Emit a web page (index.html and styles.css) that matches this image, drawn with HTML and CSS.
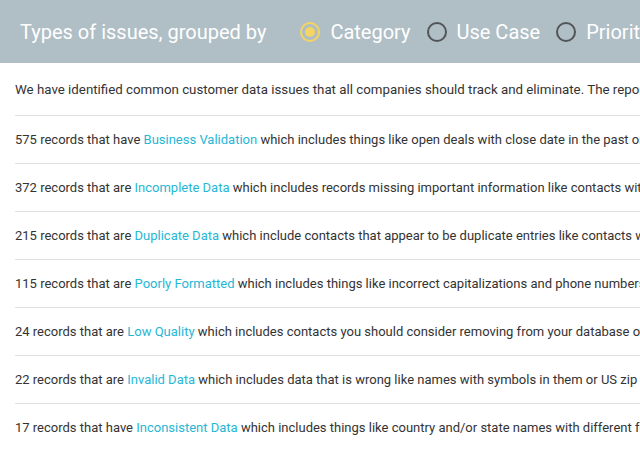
FILE: index.html
```html
<!DOCTYPE html>
<html>
<head>
<meta charset="utf-8">
<link rel="stylesheet" href="styles.css">
</head>
<body>
<header class="bar">
  <h1 class="title">Types of issues, grouped by</h1>
  <div class="radios">
    <label class="radio checked"><span class="dot"></span>Category</label>
    <label class="radio"><span class="dot"></span>Use Case</label>
    <label class="radio"><span class="dot"></span>Priority</label>
  </div>
</header>
<main class="list">
  <div class="row intro">We have identified common customer data issues that all companies should track and eliminate. The report below shows the issues found in your database.</div>
  <div class="row">575 records that have <a class="link">Business Validation</a> which includes things like open deals with close date in the past or deals without amounts.</div>
  <div class="row">372 records that are <a class="link">Incomplete Data</a> which includes records missing important information like contacts without email addresses.</div>
  <div class="row">215 records that are <a class="link">Duplicate Data</a> which include contacts that appear to be duplicate entries like contacts with the same email.</div>
  <div class="row">115 records that are <a class="link">Poorly Formatted</a> which includes things like incorrect capitalizations and phone numbers with bad formats.</div>
  <div class="row">24 records that are <a class="link">Low Quality</a> which includes contacts you should consider removing from your database or archiving.</div>
  <div class="row">22 records that are <a class="link">Invalid Data</a> which includes data that is wrong like names with symbols in them or US zip codes with letters.</div>
  <div class="row">17 records that have <a class="link">Inconsistent Data</a> which includes things like country and/or state names with different formats.</div>
</main>
</body>
</html>
```

FILE: styles.css
```css
html, body {
  margin: 0;
  padding: 0;
  overflow: hidden;
  background: #ffffff;
}
body {
  font-family: Roboto, "Liberation Sans", sans-serif;
  width: 640px;
}
.bar {
  height: 63px;
  background: #b0bec5;
  display: flex;
  align-items: center;
  padding-left: 20px;
  white-space: nowrap;
  overflow: hidden;
}
.title {
  margin: 0;
  font-size: 20px;
  font-weight: 400;
  color: #ffffff;
  margin-right: 34px;
}
.radios {
  display: flex;
  align-items: center;
  gap: 16px;
}
.radio {
  display: flex;
  align-items: center;
  font-size: 20px;
  color: #ffffff;
}
.dot {
  width: 16px;
  height: 16px;
  border: 2px solid #515558;
  border-radius: 50%;
  margin-right: 10px;
  position: relative;
}
.checked .dot {
  border-color: #f5d461;
}
.checked .dot::after {
  content: "";
  position: absolute;
  left: 3px;
  top: 3px;
  width: 10px;
  height: 10px;
  border-radius: 50%;
  background: #f5d461;
}
.list {
  padding-left: 15px;
}
.row {
  height: 47px;
  line-height: 47px;
  border-bottom: 1px solid #e0e0e0;
  font-size: 13px;
  color: #333333;
  white-space: nowrap;
}
.row.intro {
  height: 52px;
  line-height: 53px;
  font-size: 13.3px;
}
.link {
  color: #26b7d6;
}
```
